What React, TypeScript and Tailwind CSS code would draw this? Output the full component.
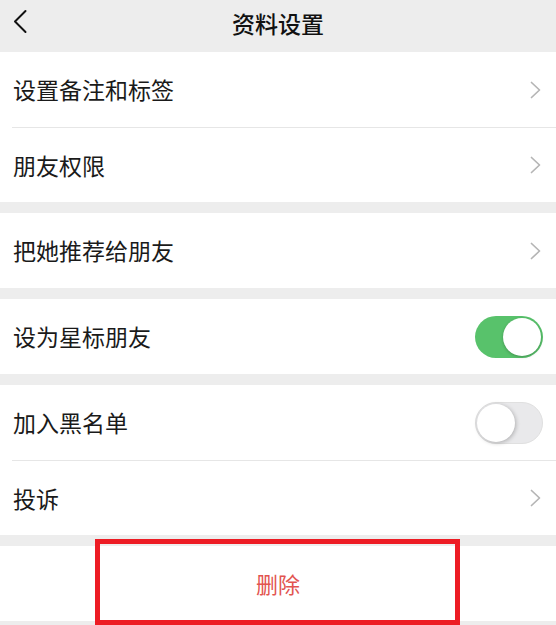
import React from "react";

const Chevron = () => (
  <svg width="11" height="18" viewBox="0 0 11 18" className="mr-[2px]">
    <path d="M1.5 1.5 L9.5 9 L1.5 16.5" fill="none" stroke="#b5b5b5" strokeWidth="1.7" strokeLinecap="round" strokeLinejoin="round" />
  </svg>
);

const Toggle = ({ on }: { on: boolean }) =>
  on ? (
    <div className="w-[68px] h-[42px] rounded-full bg-[#58c26b] flex items-center justify-end pr-[2px]">
      <div className="w-[38px] h-[38px] rounded-full bg-white shadow-[0_1px_3px_rgba(0,0,0,0.25)]" />
    </div>
  ) : (
    <div className="w-[68px] h-[42px] rounded-full bg-[#e9e9eb] border border-[#e0e0e0] flex items-center pl-[1px]">
      <div className="w-[38px] h-[38px] rounded-full bg-white shadow-[1px_1px_4px_rgba(0,0,0,0.25)]" />
    </div>
  );

const Row = ({ label, right, divider }: { label: string; right: React.ReactNode; divider?: boolean }) => (
  <div className="pl-[12px]">
    <div
      className={
        "h-[75px] flex items-center justify-between pr-[13px] " +
        (divider ? "border-t border-[#e6e6e6]" : "")
      }
    >
      <span className="ml-[1px] text-[23px] text-[#1a1a1a]">{label}</span>
      {right}
    </div>
  </div>
);

export default function App() {
  return (
    <div
      className="relative w-[556px] h-[625px] overflow-hidden bg-[#ededed]"
      style={{ fontFamily: '"Noto Sans CJK SC", "Noto Sans", sans-serif' }}
    >
      {/* Header */}
      <div className="relative h-[52px] flex items-center justify-center pb-[6px]">
        <svg width="16" height="26" viewBox="0 0 16 26" className="absolute left-[12px] top-[9px]">
          <path d="M13.5 2 L3 12.5 L13.5 23" fill="none" stroke="#111" strokeWidth="2" strokeLinecap="round" strokeLinejoin="round" />
        </svg>
        <span className="text-[23px] font-medium text-[#111]">资料设置</span>
      </div>

      <div className="bg-white">
        <Row label="设置备注和标签" right={<Chevron />} />
        <Row label="朋友权限" right={<Chevron />} divider />
      </div>

      <div className="bg-white mt-[11px]">
        <Row label="把她推荐给朋友" right={<Chevron />} />
      </div>

      <div className="bg-white mt-[11px]">
        <Row label="设为星标朋友" right={<Toggle on />} />
      </div>

      <div className="bg-white mt-[11px]">
        <Row label="加入黑名单" right={<Toggle on={false} />} />
        <Row label="投诉" right={<Chevron />} divider />
      </div>

      <div className="bg-white mt-[11px] h-[75px] flex items-center justify-center">
        <span className="text-[22px] text-[#e25450]">删除</span>
      </div>

      {/* annotation box */}
      <div className="absolute left-[95px] top-[539px] w-[365px] h-[86px] border-[5px] border-[#ed1c24]" />
    </div>
  );
}
